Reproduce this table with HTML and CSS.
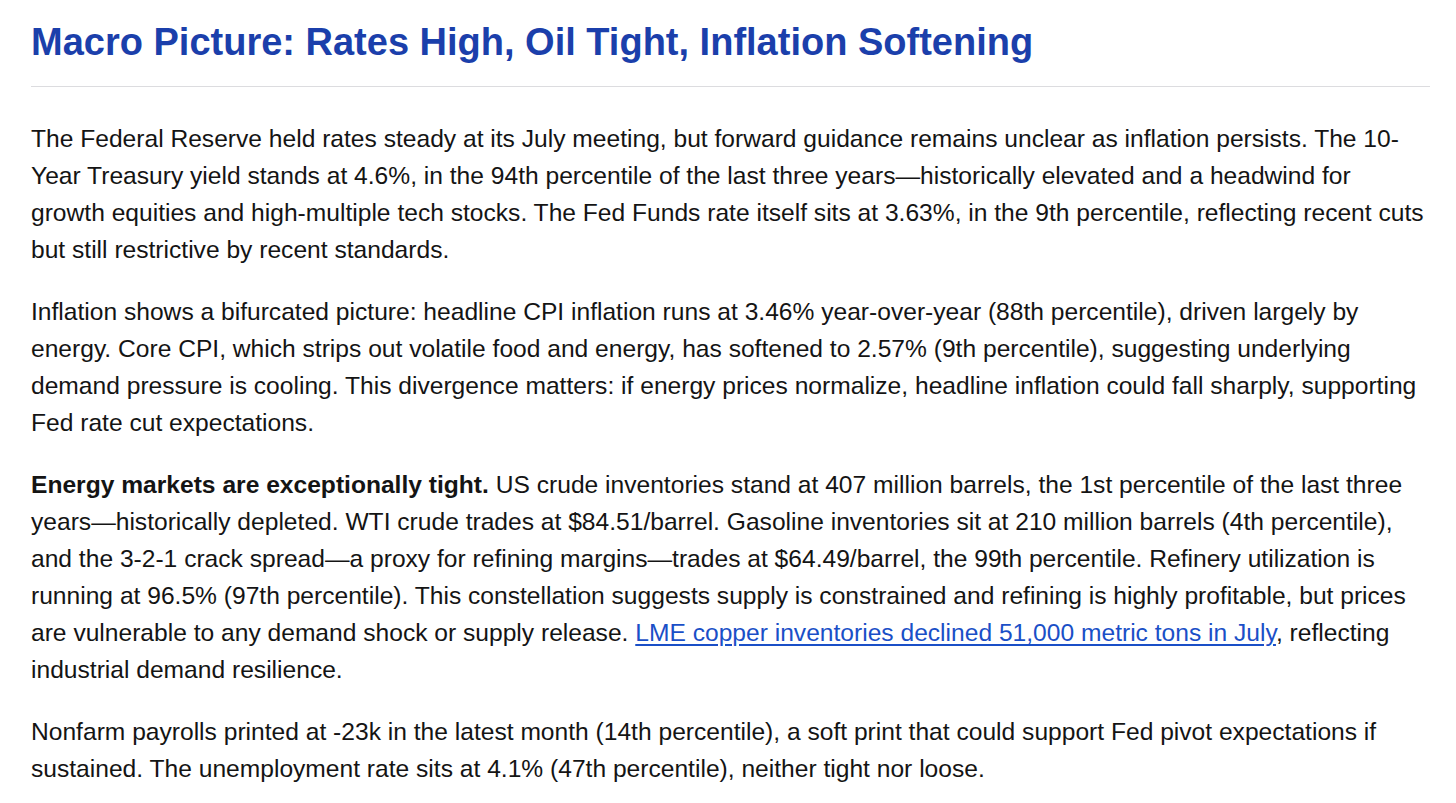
FILE: index.html
```html
<!DOCTYPE html>
<html lang="en">
<head>
<meta charset="utf-8">
<title>Macro Picture</title>
<link rel="stylesheet" href="styles.css">
</head>
<body>
<article class="post">
  <h2 class="post-title">Macro Picture: Rates High, Oil Tight, Inflation Softening</h2>
  <div class="post-body">
    <p>The Federal Reserve held rates steady at its July meeting, but forward guidance remains unclear as inflation persists. The 10-Year Treasury yield stands at 4.6%, in the 94th percentile of the last three years—historically elevated and a headwind for growth equities and high-multiple tech stocks. The Fed Funds rate itself sits at 3.63%, in the 9th percentile, reflecting recent cuts but still restrictive by recent standards.</p>
    <p>Inflation shows a bifurcated picture: headline CPI inflation runs at 3.46% year-over-year (88th percentile), driven largely by energy. Core CPI, which strips out volatile food and energy, has softened to 2.57% (9th percentile), suggesting underlying demand pressure is cooling. This divergence matters: if energy prices normalize, headline inflation could fall sharply, supporting Fed rate cut expectations.</p>
    <p><strong>Energy markets are exceptionally tight.</strong> US crude inventories stand at 407 million barrels, the 1st percentile of the last three years—historically depleted. WTI crude trades at $84.51/barrel. Gasoline inventories sit at 210 million barrels (4th percentile), and the 3-2-1 crack spread—a proxy for refining margins—trades at $64.49/barrel, the 99th percentile. Refinery utilization is running at 96.5% (97th percentile). This constellation suggests supply is constrained and refining is highly profitable, but prices are vulnerable to any demand shock or supply release. <a class="link" href="#">LME copper inventories declined 51,000 metric tons in July</a>, reflecting industrial demand resilience.</p>
    <p>Nonfarm payrolls printed at -23k in the latest month (14th percentile), a soft print that could support Fed pivot expectations if sustained. The unemployment rate sits at 4.1% (47th percentile), neither tight nor loose.</p>
  </div>
</article>
</body>
</html>
```

FILE: styles.css
```css
html, body {
  margin: 0;
  padding: 0;
  background: #ffffff;
}

body {
  font-family: "Liberation Sans", Arial, Helvetica, sans-serif;
  color: #141414;
}

.post {
  width: 1399px;
  padding: 20px 0 0 31px;
}

.post-title {
  margin: 0;
  font-size: 38px;
  line-height: 44px;
  font-weight: 700;
  color: #1b3fab;
  padding-bottom: 22px;
  border-bottom: 1px solid #dcdcdf;
}

.post-body {
  padding-top: 33px;
}

.post-body p {
  margin: 0 0 25px 0;
  font-size: 24.6px;
  line-height: 37px;
}

.post-body strong {
  font-weight: 700;
}

.link {
  color: #1a4fc7;
  text-decoration: underline;
  text-underline-offset: 3px;
}
```
